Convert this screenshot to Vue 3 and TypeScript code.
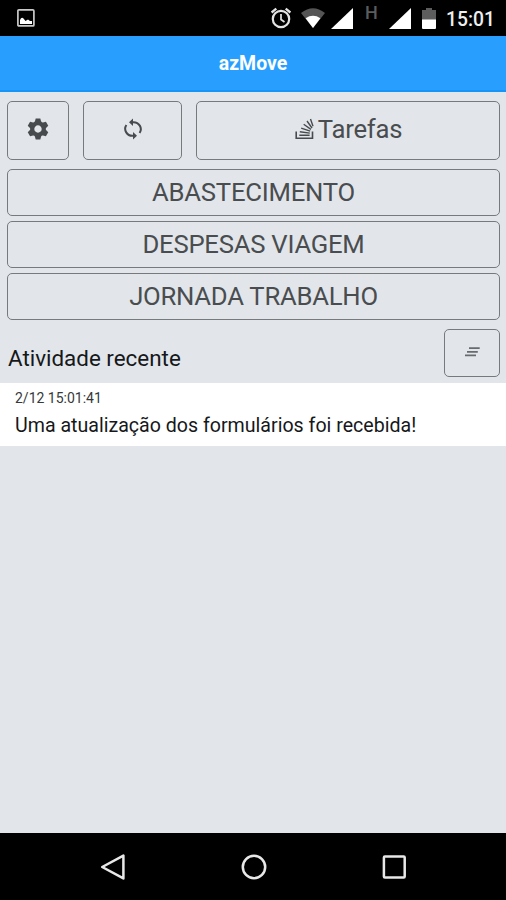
<script setup lang="ts">
const forms: string[] = ['ABASTECIMENTO', 'DESPESAS VIAGEM', 'JORNADA TRABALHO']
const activities = [{ date: '2/12 15:01:41', text: 'Uma atualização dos formulários foi recebida!' }]
const teeth: number[] = [0, 60, 120, 180, 240, 300]
</script>

<template>
  <div class="screen">
    <div class="status">
      <svg class="picture" width="18" height="18" viewBox="0 0 18 18">
        <rect x=".9" y=".9" width="16" height="16" rx="1" fill="none" stroke="#c9c9c9" stroke-width="1.7" />
        <path d="M3 15V11Q4.5 7.5 6.5 9.5L8.5 12L11 10.5L13 12H15V15Z" fill="#fff" />
      </svg>
      <svg class="alarm" width="22" height="22" viewBox="0 0 22 22" fill="none" stroke="#e4e4e4">
        <circle cx="11" cy="12" r="8.2" stroke-width="2.2" />
        <path d="M1.6 5.5L6.3 1.6M20.4 5.5L15.7 1.6" stroke-width="2.3" />
        <path d="M11 7V12.5L14.5 15" stroke-width="1.7" />
      </svg>
      <svg class="wifi" width="24" height="20" viewBox="0 0 24 20">
        <path d="M0 5Q12-4.5 24 5L12 20Z" fill="#555" />
        <path d="M4.6 10.2Q12 5.4 19.4 10.2L12 20Z" fill="#fff" />
      </svg>
      <svg class="signal" width="22" height="21" viewBox="0 0 22 21"><path d="M0 21L22 0V21Z" fill="#fff" /></svg>
      <span class="network">H</span>
      <svg class="signal second" width="22" height="21" viewBox="0 0 22 21"><path d="M0 21L22 0V21Z" fill="#fff" /></svg>
      <svg class="battery" width="14" height="21" viewBox="0 0 14 21">
        <path d="M4 0H10V2H14V12H0V2H4Z" fill="#5d5d5d" />
        <path d="M0 11.5H14V20Q14 21 13 21H1Q0 21 0 20Z" fill="#fff" />
      </svg>
      <span class="clock">15:01</span>
    </div>

    <header class="title"><span>azMove</span></header>

    <main class="content">
      <div class="tools">
        <button class="btn" aria-label="Configurações">
          <svg width="22" height="22" viewBox="-11 -11 22 22">
            <circle r="5.8" fill="none" stroke="#484b4e" stroke-width="4.2" />
            <path v-for="a in teeth" :key="a" d="M-3.4-6.5L-2.3-10.5H2.3L3.4-6.5Z" fill="#484b4e" :transform="`rotate(${a})`" />
          </svg>
        </button>
        <button class="btn" aria-label="Sincronizar">
          <svg class="sync" width="20" height="22" viewBox="0 0 20 22">
            <g fill="none" stroke="#484b4e" stroke-width="2">
              <path d="M9 4.2H10A7.3 7 0 0 1 16.6 15" />
              <path d="M11 17.8H10A7.3 7 0 0 1 3.4 7" />
            </g>
            <path d="M10 .4V8L6 4.2ZM10 14V21.6L14 17.8Z" fill="#484b4e" />
          </svg>
        </button>
        <button class="btn tasks">
          <svg width="19" height="22" viewBox="0 0 19 22" fill="none" stroke="#484b4e" stroke-width="1.4">
            <path d="M1.2 13.5V20.2H17.5V13.5" stroke-width="1.6" />
            <path d="M4.3 17.2H14.6M4.8 13.8L14.8 15.1M6.2 10.1L15.2 13.1M8.7 6.3L15.9 11.4M12 3L17 10M15.5 1L18 8.3" />
          </svg>
          <span>Tarefas</span>
        </button>
      </div>

      <button v-for="form in forms" :key="form" class="btn form"><span>{{ form }}</span></button>

      <div class="recent">
        <h2>Atividade recente</h2>
        <button class="btn" aria-label="Limpar">
          <svg width="15" height="10" viewBox="0 0 15 10" stroke="#686b6e" stroke-width="1.8">
            <path d="M4 1.2H14.7M2 4.8H12.8M0 8.4H11" />
          </svg>
        </button>
      </div>
    </main>

    <section class="list">
      <article v-for="item in activities" :key="item.date">
        <time>{{ item.date }}</time>
        <p>{{ item.text }}</p>
      </article>
    </section>

    <nav class="nav">
      <svg width="26" height="28" viewBox="0 0 26 28"><path d="M1.2 14L22.4 2.6V25.4Z" /></svg>
      <svg width="26" height="28" viewBox="0 0 26 28"><circle cx="13" cy="14" r="11.2" /></svg>
      <svg width="26" height="28" viewBox="0 0 26 28"><rect x="2.9" y="3.4" width="20.8" height="21" rx="1" /></svg>
    </nav>
  </div>
</template>

<style>
body { margin: 0; }
</style>

<style scoped>
.screen {
  width: 506px;
  height: 900px;
  display: flex;
  flex-direction: column;
  overflow: hidden;
  background: #e2e6ea;
  font-family: Roboto, "Liberation Sans", sans-serif;
}
svg { display: block; flex: none; }
.status {
  flex: none;
  height: 36px;
  box-sizing: border-box;
  display: flex;
  align-items: flex-start;
  padding: 8px 0 0 17px;
  background: #000;
}
.picture { margin-top: 1px; }
.alarm { margin-left: 235px; margin-top: -1px; }
.wifi { margin-left: 9px; }
.signal { margin-left: 6px; }
.network {
  width: 13px;
  margin-left: 12px;
  margin-top: -4px;
  color: #5c5c5c;
  font-size: 18px;
  font-weight: 500;
  line-height: 18px;
}
.second { margin-left: 11px; }
.battery { margin-left: 11px; }
.clock {
  margin-left: 10px;
  color: #eee;
  font-size: 19.3px;
  font-weight: 500;
  line-height: 23px;
}
.title {
  flex: none;
  height: 56px;
  box-sizing: border-box;
  display: flex;
  justify-content: center;
  padding-top: 16px;
  border-bottom: 2px solid #1794f8;
  background: #289fff;
  color: #fff;
  font-size: 19.5px;
  font-weight: 700;
  line-height: 24px;
}
.content {
  flex: none;
  height: 291px;
  box-sizing: border-box;
  padding: 9px 6px 0 7px;
}
.btn {
  display: flex;
  justify-content: center;
  box-sizing: border-box;
  margin: 0;
  padding: 0;
  border: 1.5px solid #777a7d;
  border-radius: 5px;
  background: transparent;
  color: #4a4d50;
  font-family: inherit;
  font-size: 25.7px;
  font-weight: 400;
  letter-spacing: -0.25px;
  line-height: 30px;
}
.tools {
  display: grid;
  grid-template-columns: 62px 99px 304px;
  gap: 14px;
  margin-bottom: 9px;
}
.tools .btn { height: 59px; padding-top: 16px; }
.tools .tasks { padding: 12px 0 0 1px; }
.tasks svg { margin: 4px 4px 0 0; }
.form { width: 100%; height: 47px; margin-bottom: 5px; padding-top: 7px; }
.recent {
  display: flex;
  justify-content: space-between;
  align-items: flex-start;
  padding: 4px 0 0 1px;
}
.recent h2 {
  margin: 15px 0 0;
  color: #16181a;
  font-size: 22.4px;
  font-weight: 400;
  line-height: 28px;
}
.recent .btn { width: 56px; height: 48px; padding-top: 17px; }
.list { flex: none; height: 63px; background: #fff; }
.list article { padding: 6px 15px; }
.list time {
  display: block;
  color: #36383a;
  font-size: 14px;
  line-height: 18px;
}
.list p {
  margin: 7px 0 0;
  color: #16181a;
  font-size: 19.6px;
  line-height: 24px;
}
.nav {
  height: 67px;
  box-sizing: border-box;
  margin-top: auto;
  display: flex;
  justify-content: center;
  gap: 114px;
  padding: 20px 0 0 1px;
  background: #000;
}
.nav svg { fill: none; stroke: #e8e8e8; stroke-width: 2.5; stroke-linejoin: round; }
</style>
